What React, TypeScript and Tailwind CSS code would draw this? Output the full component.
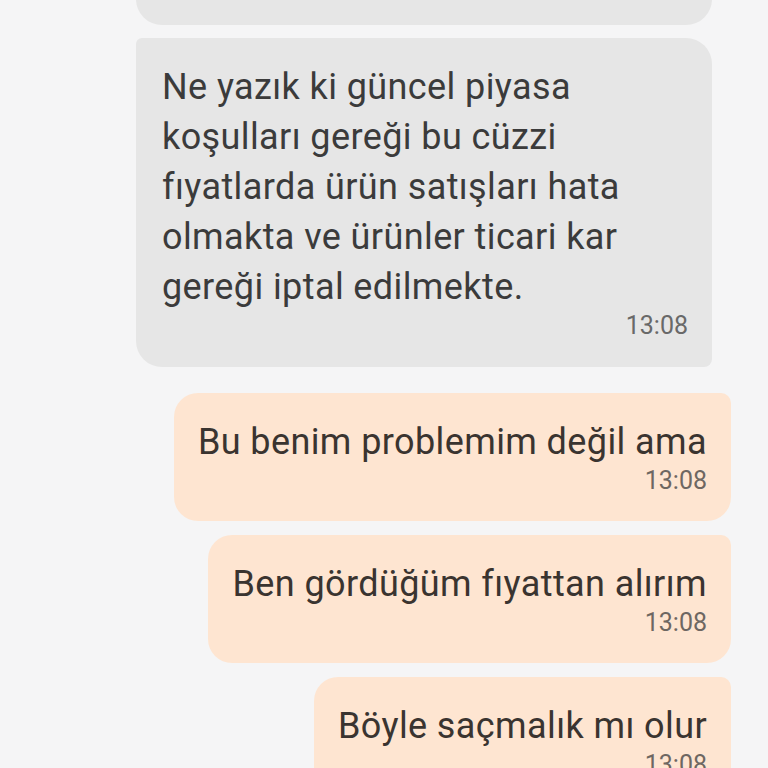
import React from "react";

const font = { fontFamily: "Roboto, 'Noto Sans', sans-serif" };

function Out({ text }: { text: string }) {
  return (
    <div className="flex justify-end pr-[37px]">
      <div className="bg-[#fee5d1] rounded-[24px] rounded-tr-[10px] pl-[24px] pr-[24px] pt-[24px] pb-[26px] flex flex-col items-end">
        <div className="text-[36px] leading-[50px] tracking-[0.4px] text-[#3a3430] whitespace-nowrap">{text}</div>
        <div className="text-[25px] leading-[28px] text-[#6e6762]">13:08</div>
      </div>
    </div>
  );
}

export default function App() {
  return (
    <div className="w-[768px] h-[768px] overflow-hidden bg-[#f5f5f6]" style={font}>
      <div className="flex flex-col">
        <div className="pl-[136px] mt-[-75px]">
          <div className="w-[576px] h-[100px] bg-[#e6e6e6] rounded-b-[26px]" />
        </div>
        <div className="pl-[136px] mt-[13px]">
          <div className="w-[576px] bg-[#e6e6e6] rounded-[26px] rounded-tl-[6px] rounded-br-[8px] pl-[26px] pr-[24px] pt-[24px] pb-[27px] flex flex-col">
            <div className="text-[36px] leading-[50px] tracking-[0.4px] text-[#3b3b3b]">
              Ne yazık ki güncel piyasa
              <br />
              koşulları gereği bu cüzzi
              <br />
              fıyatlarda ürün satışları hata
              <br />
              olmakta ve ürünler ticari kar
              <br />
              gereği iptal edilmekte.
            </div>
            <div className="self-end text-[25px] leading-[28px] text-[#696969]">13:08</div>
          </div>
        </div>
        <div className="mt-[26px] flex flex-col gap-[14px]">
          <Out text="Bu benim problemim değil ama" />
          <Out text="Ben gördüğüm fıyattan alırım" />
          <Out text="Böyle saçmalık mı olur" />
        </div>
      </div>
    </div>
  );
}
